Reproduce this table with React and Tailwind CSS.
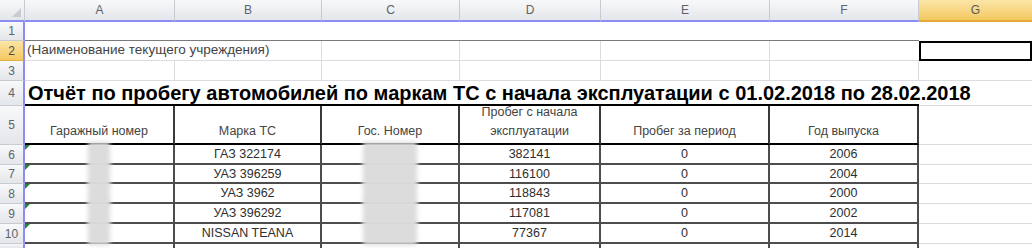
import React from 'react';

const cols = ['A', 'B', 'C', 'D', 'E', 'F', 'G'];

const rows = [
  { n: 6, mark: 'ГАЗ 322174', total: '382141', period: '0', year: '2006' },
  { n: 7, mark: 'УАЗ 396259', total: '116100', period: '0', year: '2004' },
  { n: 8, mark: 'УАЗ 3962', total: '118843', period: '0', year: '2000' },
  { n: 9, mark: 'УАЗ 396292', total: '117081', period: '0', year: '2002' },
  { n: 10, mark: 'NISSAN TEANA', total: '77367', period: '0', year: '2014' },
];

const hdr = 'bg-linear-to-b from-[#f8f9fa] to-[#e3e6ea] text-[#5f6368]';
const rowHdr = `${hdr} flex items-center justify-center border-b border-b-[#c8ccd1] border-r-2 border-r-[#8c8cf2] text-[12px] text-[#4a4a4a]`;
const grid = 'border-r border-b border-[#dadcdf]';
const box = 'border-r-2 border-b-2 border-[#4d4d4d]';
const cellText = 'flex items-center justify-center pt-[1px] text-[12.5px] text-[#2e2e2e]';
const head = 'border-r-2 border-b-2 border-[#3a3a3a] border-b-black flex items-end justify-center pb-[2px] text-[12.5px] text-[#444]';

function RowNum({ n, active }) {
  return (
    <div
      className={
        active
          ? 'flex items-center justify-center border-b border-b-[#e2b24a] border-r-2 border-r-[#8c8cf2] bg-linear-to-b from-[#fbe5a6] to-[#f4c85e] text-[12px] text-[#4a4a4a]'
          : rowHdr
      }
    >
      {n}
    </div>
  );
}

function Blur({ w }) {
  return (
    <div className="relative h-full w-full flex justify-center">
      <div className={`absolute -top-[3px] -bottom-[3px] ${w} bg-[#dcdcdc] blur-[2px]`} />
    </div>
  );
}

export default function App() {
  return (
    <div className="w-[1032px] h-[248px] overflow-hidden bg-white font-['Liberation_Sans',Arial,sans-serif]">
      <div className="grid grid-cols-[25px_150px_147px_138px_141px_169px_149px_113px] grid-rows-[22px_19px_20px_20px_25px_39px_20px_19px_20px_20px_20px_4px]">
        {/* column headers */}
        <div className={`${hdr} relative border-r border-r-[#c8ccd1] border-b-2 border-b-[#8c8cf2]`}>
          <div className="absolute right-[3px] bottom-[3px] w-0 h-0 border-l-[9px] border-l-transparent border-b-[9px] border-b-[#c9cbcf]" />
        </div>
        {cols.map((c) =>
          c === 'G' ? (
            <div
              key={c}
              className="flex items-center justify-center bg-linear-to-b from-[#fbe5a6] to-[#f4c85e] border-b-2 border-b-[#e3a93a] text-[12px] text-[#5a5a5a]"
            >
              {c}
            </div>
          ) : (
            <div
              key={c}
              className={`${hdr} flex items-center justify-center border-r border-r-[#c8ccd1] border-b-2 border-b-[#8c8cf2] text-[12px]`}
            >
              {c}
            </div>
          )
        )}

        {/* row 1 */}
        <RowNum n={1} />
        <div className="col-span-6 border-b border-b-[#7a7a7a]" />
        <div />

        {/* row 2 */}
        <RowNum n={2} active />
        <div className={`col-span-2 ${grid} flex items-center pl-[2px] text-[13.5px] text-[#444] whitespace-nowrap`}>
          (Наименование текущего учреждения)
        </div>
        <div className={grid} />
        <div className={grid} />
        <div className={grid} />
        <div className="border-b border-[#dadcdf]" />
        <div className="border-2 border-black" />

        {/* row 3 */}
        <RowNum n={3} />
        {cols.slice(0, 6).map((c) => (
          <div key={c} className={grid} />
        ))}
        <div className="border-b border-[#dadcdf]" />

        {/* row 4 */}
        <RowNum n={4} />
        <div className="col-span-6 border-b-2 border-b-black flex items-center pl-[3px] whitespace-nowrap text-[20px] font-bold text-black">
          Отчёт по пробегу автомобилей по маркам ТС с начала эксплуатации с 01.02.2018 по 28.02.2018
        </div>
        <div className="border-b border-[#dadcdf]" />

        {/* row 5 */}
        <RowNum n={5} />
        <div className={head}>Гаражный номер</div>
        <div className={head}>Марка ТС</div>
        <div className={head}>Гос. Номер</div>
        <div className={`${head} text-center leading-[19px]`}>
          Пробег с начала
          <br />
          эксплуатации
        </div>
        <div className={head}>Пробег за период</div>
        <div className={head}>Год выпуска</div>
        <div className="border-b border-[#dadcdf]" />

        {/* data rows */}
        {rows.map((r) => (
          <React.Fragment key={r.n}>
            <RowNum n={r.n} />
            <div className={`${box} relative`}>
              <div className="absolute left-0 top-0 w-0 h-0 border-t-[5px] border-t-[#1f8a2a] border-r-[5px] border-r-transparent" />
              <Blur w="w-[22px]" />
            </div>
            <div className={`${box} ${cellText}`}>{r.mark}</div>
            <div className={box}>
              <Blur w="w-[54px]" />
            </div>
            <div className={`${box} ${cellText}`}>{r.total}</div>
            <div className={`${box} ${cellText}`}>{r.period}</div>
            <div className={`${box} ${cellText}`}>{r.year}</div>
            <div className="border-b border-[#dadcdf]" />
          </React.Fragment>
        ))}

        {/* partial row 11 */}
        <div className={`${hdr} border-r-2 border-r-[#8c8cf2]`} />
        {cols.slice(0, 6).map((c) => (
          <div key={c} className="border-r-2 border-[#4d4d4d]" />
        ))}
        <div />
      </div>
    </div>
  );
}
